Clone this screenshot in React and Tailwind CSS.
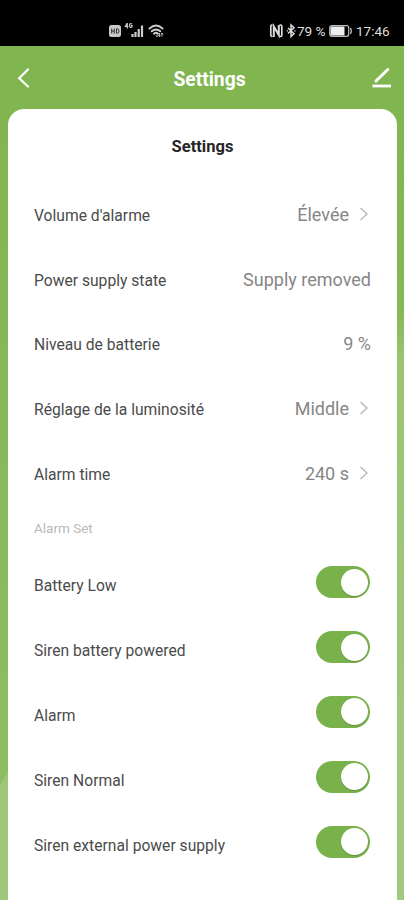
import React from "react";

const settings = [
  { label: "Volume d'alarme", value: "Élevée", arrow: true },
  { label: "Power supply state", value: "Supply removed" },
  { label: "Niveau de batterie", value: "9 %" },
  { label: "Réglage de la luminosité", value: "Middle", arrow: true },
  { label: "Alarm time", value: "240 s", arrow: true },
];

const alarms = ["Battery Low", "Siren battery powered", "Alarm", "Siren Normal", "Siren external power supply"];

function StatusBar() {
  return (
    <div className="flex h-[46px] shrink-0 items-center bg-black pt-[15px] text-[#dedede]">
      <svg className="ml-[108px] block" width="57" height="16" viewBox="0 0 57 16" fill="none">
        <rect x="1" y="2" width="12" height="12" rx="2.5" fill="#c9c9c9" />
        <path d="M3.7 5.5v5M6.3 5.5v5M3.7 8h2.6M8.5 5.7v4.6h.8q1.7 0 1.7-2.3t-1.7-2.3z" stroke="#333" strokeWidth="1" />
        <path d="M19.300 0v5.500M19.300 0l-2 3.500h3M24 1q-2.400-1.200-2.400 1.500T24 4V2.700h-1" stroke="#ccc" strokeWidth="1.2" />
        <path d="M24.500 11v3M27.500 9v5M30.700 6v8M34 2.500v11.500" stroke="#ccc" strokeWidth="2.200" />
        <path d="M41.500 5.500q6.500-6 13 0M43.700 8.300q4.300-3.800 8.600 0M46 10.700q2-1.700 4 0" stroke="#ccc" strokeWidth="1.9" strokeLinecap="round" />
        <path d="M48 12.800l1-1 1 1-1 1zM51.500 10v3.500M50.500 12.500l1 1.300 1-1.300M54 13.500V10M53 11.300l1-1.300 1 1.300" stroke="#ccc" strokeWidth=".9" />
      </svg>
      <svg className="ml-[104px] block" width="28" height="16" viewBox="0 0 28 16" fill="none">
        <path d="M3.500 2H2.800Q1.800 2 1.800 3.500v8.500Q1.800 13.500 3 13.500h.5M10.500 2H11.500Q12.800 2 12.800 3.500v8.500q0 1.500-1.300 1.500h-1" stroke="#ddd" strokeWidth="1.700" />
        <path d="M4.800 14V3.500l5 8.500V2" stroke="#ddd" strokeWidth="2" />
        <path d="M19 5l6 5.700-3 2.800V2L25 4.800l-6 5.700" stroke="#ddd" strokeWidth="1.500" />
        <path d="M17.700 7.800h1.300M25.200 7.800h1.300" stroke="#ddd" strokeWidth="1.300" />
      </svg>
      <span className="w-[29px] whitespace-nowrap text-[13.700px] leading-4 tracking-[-0.1px]">79 %</span>
      <svg className="ml-[3px] block" width="23" height="12" viewBox="0 0 23 12" fill="none">
        <rect x=".7" y=".7" width="19" height="10.600" rx="2" stroke="#bbb" strokeWidth="1.200" />
        <rect x="1.500" y="1.500" width="14" height="9" rx=".5" fill="#eee" />
        <path d="M21 3.500q1.300 0 1.300 2.500T21 8.500" stroke="#bbb" strokeWidth="1.300" />
      </svg>
      <span className="ml-[4px] whitespace-nowrap text-[13.500px] leading-4">17:46</span>
    </div>
  );
}

function Toggle() {
  return (
    <div className="-mt-[7px] mr-px flex h-8 w-[54px] items-center justify-end rounded-full bg-[#79b14a] pr-[2px]">
      <div className="h-[27px] w-[27px] rounded-full bg-white shadow-[0_1px_1px_rgba(0,0,0,0.18)]" />
    </div>
  );
}

export default function App() {
  return (
    <div className="relative flex h-[900px] w-[404px] flex-col overflow-hidden bg-linear-to-b from-[#7fb44e] to-[#8fbf65] font-[Roboto,sans-serif]">
      <svg className="absolute inset-0" width="404" height="900" viewBox="0 0 404 900">
        <defs>
          <linearGradient id="wave" gradientUnits="userSpaceOnUse" x1="0" y1="310" x2="0" y2="360">
            <stop offset="0" stopColor="#fff" stopOpacity="0" />
            <stop offset="1" stopColor="#fff" stopOpacity=".17" />
          </linearGradient>
        </defs>
        <path d="M392 310h12v590h-12z" fill="url(#wave)" />
        <path d="M0 785L12 765V900H0z" fill="#fff" fillOpacity=".15" />
      </svg>
      <div className="relative flex flex-1 flex-col">
        <StatusBar />
        <header className="flex h-[63px] shrink-0 items-center justify-between pl-[17px] pr-[12px] text-white">
          <svg width="14" height="20" viewBox="0 0 14 20" fill="none" className="block">
            <path d="M11 1.500L2.200 10.200 11 18.500" stroke="#fff" strokeWidth="2.200" strokeLinecap="round" />
          </svg>
          <h1 className="ml-[16px] pt-[4px] text-[19.300px] font-bold leading-6">Settings</h1>
          <svg width="20" height="21" viewBox="0 0 20 21" fill="none" className="block">
            <path d="M4 14L15.800 2.500" stroke="#fff" strokeWidth="3" strokeLinecap="round" />
            <path d="M.5 19h18.500" stroke="#fff" strokeWidth="2.800" />
          </svg>
        </header>
        <main className="ml-[8px] mr-[7px] flex-1 rounded-t-[16px] bg-white pl-[26px] pr-[26px]">
          <h2 className="pb-[23px] pt-[28px] text-center text-[16.500px] font-bold leading-5 text-[#262629]">Settings</h2>
          {settings.map((s) => (
            <div key={s.label} className="flex h-[64.8px] items-center justify-between">
              <span className="pt-[7px] text-[15.650px] leading-5 text-[#4b4b4b]">{s.label}</span>
              <span className="flex items-center pt-[5px] text-[18px] leading-5 text-[#868686]">
                {s.value}
                {s.arrow && (
                  <svg width="10" height="14" viewBox="0 0 10 14" fill="none" className="-mt-[2px] ml-[10px] mr-[2px] block">
                    <path d="M1.500 1L8 7l-6.500 6" stroke="#b5b5b5" strokeWidth="1.300" />
                  </svg>
                )}
              </span>
            </div>
          ))}
          <div className="flex h-[49.5px] items-center pb-px text-[13.500px] leading-4 text-[#b9b9b9]">Alarm Set</div>
          {alarms.map((a) => (
            <div key={a} className="flex h-[64.8px] items-center justify-between">
              <span className="pt-px text-[15.650px] leading-5 text-[#4b4b4b]">{a}</span>
              <Toggle />
            </div>
          ))}
        </main>
      </div>
    </div>
  );
}
